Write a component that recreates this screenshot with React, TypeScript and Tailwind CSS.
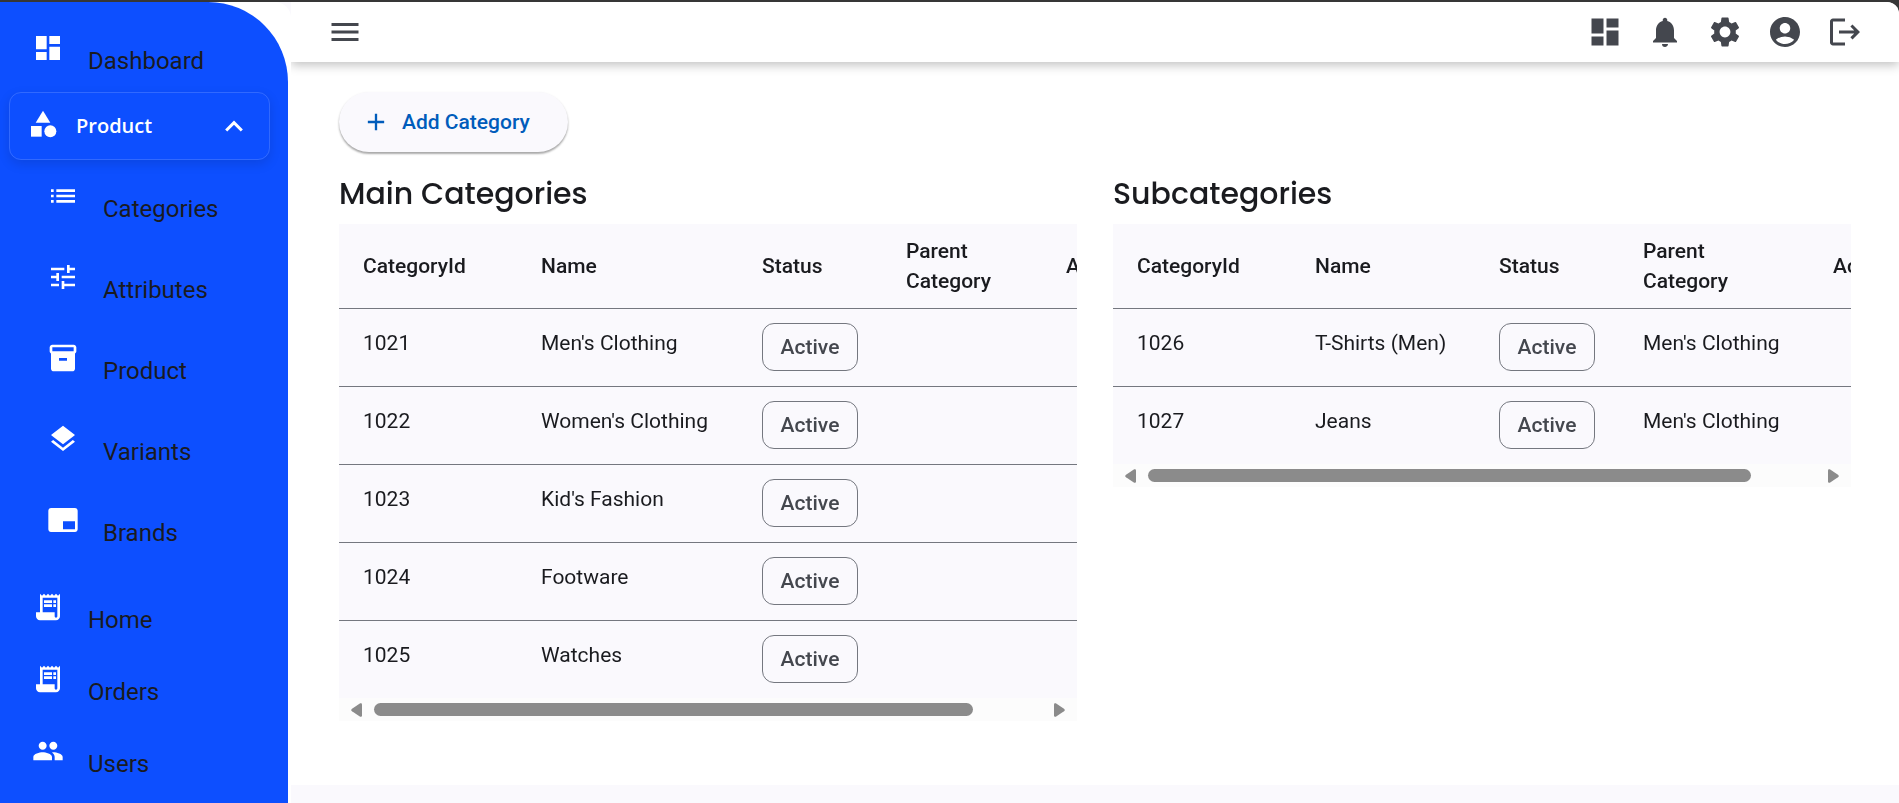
import { useEffect, useRef, useState } from "react";
import type { IconType } from "react-icons";
import {
  MdAccountCircle,
  MdAdd,
  MdBrandingWatermark,
  MdCategory,
  MdDashboard,
  MdInventory2,
  MdLayers,
  MdList,
  MdLogout,
  MdMenu,
  MdNotifications,
  MdPeople,
  MdReceiptLong,
  MdSettings,
  MdTune,
} from "react-icons/md";

type NavEntry = { label: string; icon: IconType };

const productLinks: NavEntry[] = [
  { label: "Categories", icon: MdList },
  { label: "Attributes", icon: MdTune },
  { label: "Product", icon: MdInventory2 },
  { label: "Variants", icon: MdLayers },
  { label: "Brands", icon: MdBrandingWatermark },
];

const bottomLinks: NavEntry[] = [
  { label: "Home", icon: MdReceiptLong },
  { label: "Orders", icon: MdReceiptLong },
  { label: "Users", icon: MdPeople },
];

const headerActions: NavEntry[] = [
  { label: "Dashboard", icon: MdDashboard },
  { label: "Notifications", icon: MdNotifications },
  { label: "Settings", icon: MdSettings },
  { label: "Account", icon: MdAccountCircle },
  { label: "Log out", icon: MdLogout },
];

function NavLink({ label, icon: Icon, nested = false }: NavEntry & { nested?: boolean }) {
  return (
    <a
      href="#"
      className={
        nested
          ? "flex h-[81px] items-start gap-6 pl-[47px] text-2xl/6 text-[#1a1b1f]"
          : "flex h-18 items-start gap-6 pl-8 text-2xl/6 text-[#1a1b1f]"
      }
    >
      <Icon className="mt-3 size-8 shrink-0 text-white" />
      <span className="mt-[29px]">{label}</span>
    </a>
  );
}

function Sidebar() {
  return (
    <aside className="w-[291px] shrink-0 rounded-tr-2xl bg-white pr-[3px]">
      <nav className="h-full rounded-tr-[80px] bg-[#0d4fff] pt-[18px]">
        <NavLink label="Dashboard" icon={MdDashboard} />
        <button
          type="button"
          aria-expanded="true"
          className="mr-[18px] ml-[9px] flex h-[68px] w-[261px] items-center rounded-xl border border-white/15 pr-[26px] pl-[17px] text-white shadow-[0_4px_12px_rgba(0,0,0,0.12)]"
        >
          <MdCategory className="mb-1 size-8" />
          <span className="ml-[17px] flex-1 text-left font-['Segoe_UI','Open_Sans',sans-serif] text-xl font-semibold">
            Product
          </span>
          <svg viewBox="0 0 18 12" className="h-3 w-[18px]" fill="none" stroke="currentColor" strokeWidth="3">
            <path d="M1.200 10.500 9 2.700 16.800 10.500" />
          </svg>
        </button>
        <div className="pt-2 pb-[6px]">
          {productLinks.map((link) => (
            <NavLink key={link.label} {...link} nested />
          ))}
        </div>
        {bottomLinks.map((link) => (
          <NavLink key={link.label} {...link} />
        ))}
      </nav>
    </aside>
  );
}

function TopBar() {
  return (
    <header className="z-10 flex h-15 items-center justify-between bg-white px-6 text-[#44474e] shadow-[0_3px_10px_rgba(0,0,0,0.25)]">
      <button type="button" aria-label="Menu" className="grid size-15 place-items-center">
        <MdMenu className="size-9" />
      </button>
      <div className="flex">
        {headerActions.map(({ label, icon: Icon }) => (
          <button key={label} type="button" aria-label={label} className="grid size-15 place-items-center">
            <Icon className="size-9" />
          </button>
        ))}
      </div>
    </header>
  );
}

type Category = { id: number; name: string; parent?: string };

const mainCategories: Category[] = [
  { id: 1021, name: "Men's Clothing" },
  { id: 1022, name: "Women's Clothing" },
  { id: 1023, name: "Kid's Fashion" },
  { id: 1024, name: "Footware" },
  { id: 1025, name: "Watches" },
];

const subcategories: Category[] = [
  { id: 1026, name: "T-Shirts (Men)", parent: "Men's Clothing" },
  { id: 1027, name: "Jeans", parent: "Men's Clothing" },
];

type TableProps = { title: string; rows: Category[]; columns: number[] };

function CategoryTable({ title, rows, columns }: TableProps) {
  const viewport = useRef<HTMLDivElement>(null);
  const [thumb, setThumb] = useState({ width: 90, left: 0 });
  const total = columns.reduce((sum, width) => sum + width, 0);

  const measure = () => {
    const el = viewport.current;
    if (!el) return;
    setThumb({
      width: (el.clientWidth / el.scrollWidth) * 100,
      left: (el.scrollLeft / el.scrollWidth) * 100,
    });
  };

  useEffect(() => {
    measure();
    window.addEventListener("resize", measure);
    return () => window.removeEventListener("resize", measure);
  }, []);

  const scroll = (amount: number) => viewport.current?.scrollBy({ left: amount, behavior: "smooth" });

  return (
    <section className="min-w-0">
      <h2 className="mt-[22px] mb-2.5 font-['Poppins','Inter',sans-serif] text-[30px]/10 font-medium text-[#1a1b1f]">
        {title}
      </h2>
      <div ref={viewport} onScroll={measure} className="overflow-x-auto bg-[#faf9fd] [scrollbar-width:none]">
        <table
          className="min-w-full table-fixed border-collapse text-left text-[21px]/[30px] text-[#1a1b1f]"
          style={{ width: total }}
        >
          <colgroup>
            {columns.map((width, index) => (
              <col key={index} style={{ width }} />
            ))}
          </colgroup>
          <thead>
            <tr className="h-[84px] border-b border-[#74777f]">
              {["CategoryId", "Name", "Status", "Parent Category", "Actions"].map((heading) => (
                <th key={heading} scope="col" className="px-6 font-medium">
                  {heading}
                </th>
              ))}
            </tr>
          </thead>
          <tbody>
            {rows.map((row) => (
              <tr key={row.id} className="h-[78px] border-b border-[#74777f] last:border-b-0">
                <td className="px-6 pb-2">{row.id}</td>
                <td className="px-6 pb-2 whitespace-nowrap">{row.name}</td>
                <td className="px-6">
                  <span className="flex h-12 w-24 items-center justify-center rounded-xl border border-[#74777f] font-medium text-[#44474e]">
                    Active
                  </span>
                </td>
                <td className="px-6 pb-2 whitespace-nowrap">{row.parent}</td>
                <td />
              </tr>
            ))}
          </tbody>
        </table>
      </div>
      <div className="flex h-[23px] items-center gap-3 bg-[#fcfcfc] px-3 text-[#8b8b8b]">
        <button type="button" aria-label="Scroll left" onClick={() => scroll(-80)}>
          <svg viewBox="0 0 11 14" className="h-3.5 w-[11px]" fill="currentColor">
            <path d="M9.2.3 1 5.7Q-.6 7 1 8.3l8.200 5.400Q11 14.300 11 12.500V1.500Q11-.3 9.200.3Z" />
          </svg>
        </button>
        <div className="flex-1">
          <div
            className="h-[13px] rounded-full bg-[#8b8b8b]"
            style={{ width: `${thumb.width}%`, marginLeft: `${thumb.left}%` }}
          />
        </div>
        <button type="button" aria-label="Scroll right" onClick={() => scroll(80)}>
          <svg viewBox="0 0 11 14" className="h-3.5 w-[11px]" fill="currentColor">
            <path d="M1.800.3 10 5.700Q11.600 7 10 8.300L1.800 13.700Q0 14.300 0 12.500V1.500Q0-.3 1.800.3Z" />
          </svg>
        </button>
      </div>
    </section>
  );
}

export default function App() {
  return (
    <div className="flex min-h-screen bg-[#363636] pt-[2px] font-['Roboto',sans-serif]">
      <div className="flex min-w-0 flex-1 rounded-tr-xl bg-[#faf9fd]">
        <Sidebar />
        <div className="flex min-w-0 flex-1 flex-col overflow-hidden rounded-tr-xl">
          <TopBar />
          <main className="bg-white px-12 pt-[30px] pb-16">
            <button
              type="button"
              className="flex h-15 items-center gap-3 rounded-full bg-[#faf9fd] pr-[38px] pl-[23px] text-[21px]/[30px] font-medium text-[#005cbb] shadow-[0_2px_2px_rgba(0,0,0,0.3),0_1px_3px_rgba(0,0,0,0.08)]"
            >
              <MdAdd className="size-7" />
              Add Category
            </button>
            <div className="grid grid-cols-1 gap-x-9 xl:grid-cols-2">
              <CategoryTable title="Main Categories" rows={mainCategories} columns={[178, 221, 144, 160, 120]} />
              <CategoryTable title="Subcategories" rows={subcategories} columns={[178, 184, 144, 190, 121]} />
            </div>
          </main>
        </div>
      </div>
    </div>
  );
}
